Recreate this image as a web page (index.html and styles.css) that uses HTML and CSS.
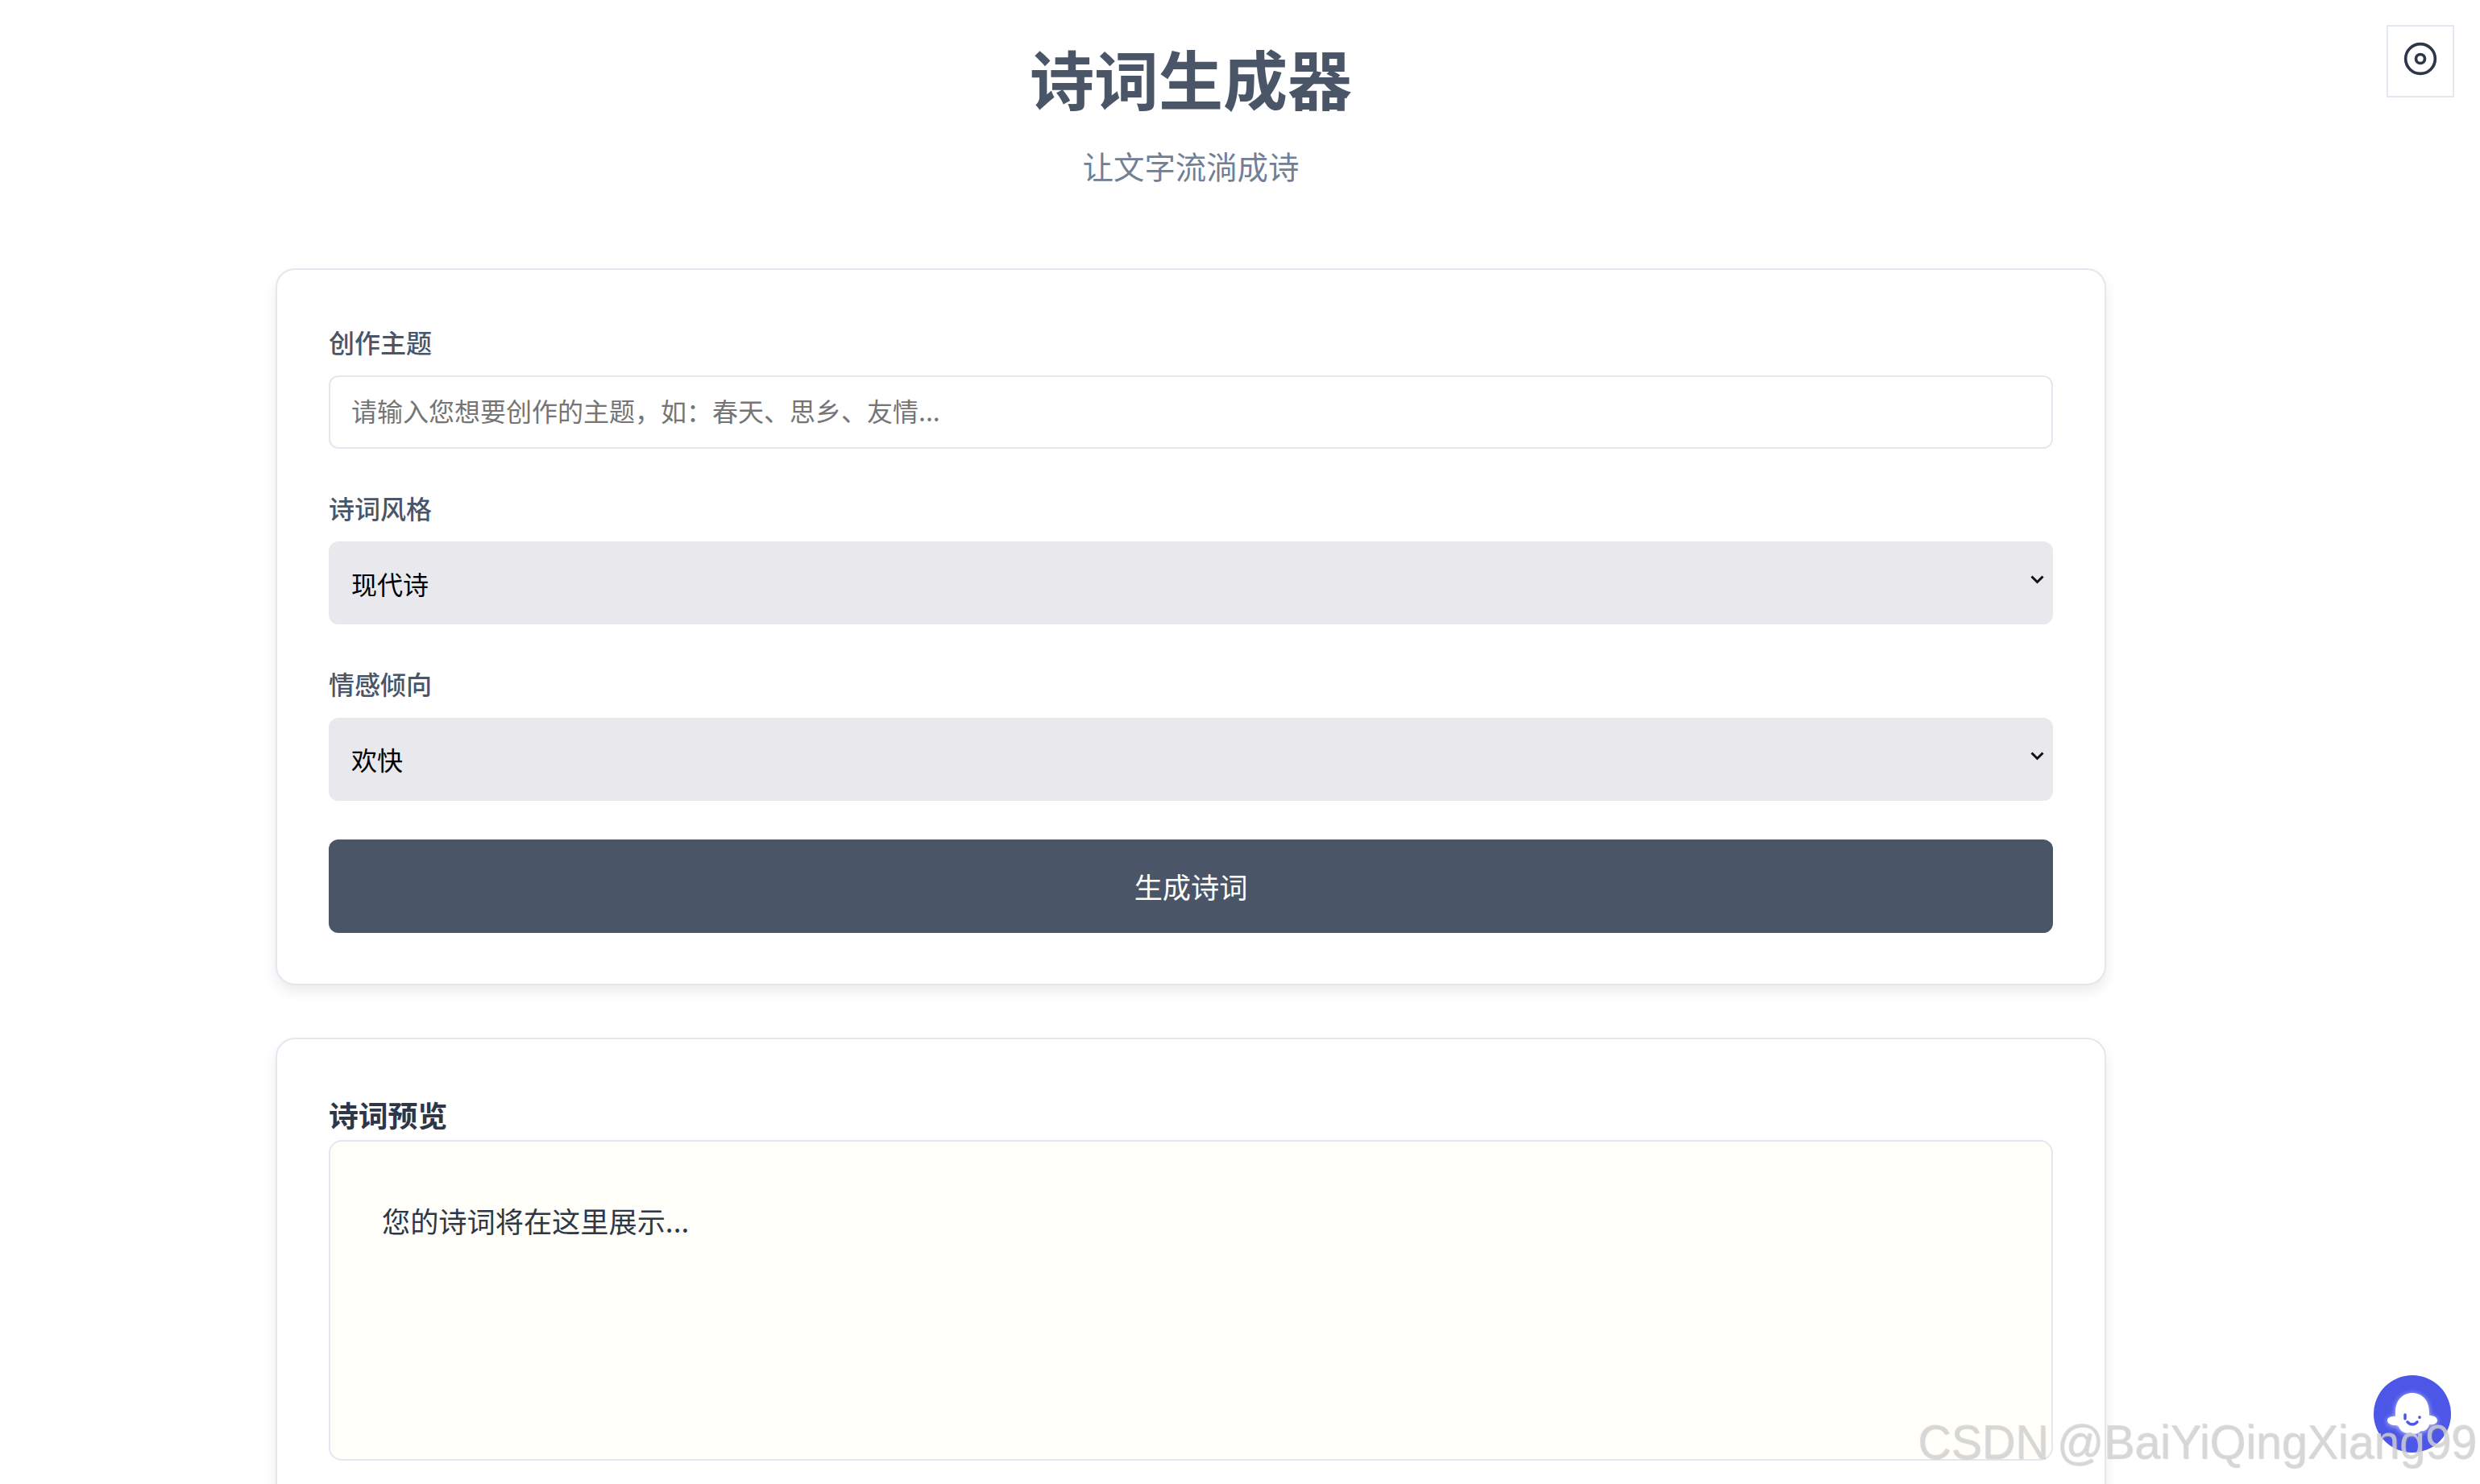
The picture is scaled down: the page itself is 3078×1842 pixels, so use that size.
FILE: index.html
```html
<!DOCTYPE html>
<html lang="zh-CN">
  <head>
    <meta charset="UTF-8" />
    <title>诗词生成器</title>
    <link rel="stylesheet" href="styles.css">
  </head>

  <body>
    <button class="theme-toggle" type="button" aria-label="切换主题">
      <svg viewBox="0 0 24 24" class="theme-icon">
        <circle cx="12" cy="12" r="10"></circle>
        <circle cx="12" cy="12" r="3"></circle>
      </svg>
    </button>

    <div class="page">
      <header class="header">
        <h1 class="title">诗词生成器</h1>
        <p class="subtitle">让文字流淌成诗</p>
      </header>

      <section class="card">
        <div class="form-group">
          <label class="label" for="topic">创作主题</label>
          <input class="input" id="topic" type="text" placeholder="请输入您想要创作的主题，如：春天、思乡、友情...">
        </div>

        <div class="form-group">
          <label class="label" for="style">诗词风格</label>
          <div class="select-wrap">
            <select class="select" id="style">
              <option>现代诗</option>
              <option>五言绝句</option>
              <option>七言律诗</option>
            </select>
            <svg class="chevron" viewBox="0 0 17 11"><path d="M1.5 1.5 8.5 8.5 15.5 1.5"></path></svg>
          </div>
        </div>

        <div class="form-group">
          <label class="label" for="mood">情感倾向</label>
          <div class="select-wrap">
            <select class="select" id="mood">
              <option>欢快</option>
              <option>忧伤</option>
              <option>豪迈</option>
            </select>
            <svg class="chevron" viewBox="0 0 17 11"><path d="M1.5 1.5 8.5 8.5 15.5 1.5"></path></svg>
          </div>
        </div>

        <button class="generate-btn" type="button">生成诗词</button>
      </section>

      <section class="card">
        <h2 class="preview-title">诗词预览</h2>
        <div class="preview">
          <p class="preview-text">您的诗词将在这里展示...</p>
        </div>
      </section>
    </div>

    <!-- floating assistant -->
    <div class="assistant">
      <svg viewBox="0 0 96 96">
        <circle cx="48" cy="48" r="48" fill="#4c57e8"></circle>
        <path class="ghost" d="M27 46C27 31 36 22 48 22S69 31 69 46V50C74 50 79 52 79 56S74 62 69 61C68 66 64 70 59 69C55 73 50 74 46 71C41 73 35 71 32 66C31 63 30 62 27 62C22 62 17 60 17 56S22 51 27 51Z"></path>
        <path class="ghost-face" d="M39 49V54M57 52V52.4M42 58C45 62 51 62 54 58"></path>
      </svg>
    </div>

    <div class="watermark">CSDN @BaiYiQingXiang99</div>
  </body>
</html>
```

FILE: styles.css
```css
html,
body {
  height: 100%;
}

body {
  margin: 0;
  overflow: hidden;
  position: relative;
  background: #fff;
  color: #2d3748;
  font-family: "Noto Sans CJK SC", "Noto Sans", sans-serif;
  font-size: 32px;
  line-height: 1.6;
}

.page {
  width: 2956px;
}

/* Header */
.header {
  height: 333px;
  padding-top: 35px;
  box-sizing: border-box;
  text-align: center;
}

.title {
  margin: 0;
  font-size: 80px;
  font-weight: 700;
  line-height: 120px;
  color: #4a5568;
}

.subtitle {
  margin: 20px 0 0;
  font-size: 38.4px;
  line-height: 61px;
  color: #718096;
}

/* Cards */
.card {
  width: 2272px;
  margin: 0 auto 65px;
  padding: 64px 64px 63px;
  box-sizing: border-box;
  background: #fff;
  border: 2px solid #e2e8f0;
  border-radius: 24px;
  box-shadow: 0 8px 16px rgba(0, 0, 0, 0.08);
}

.form-group {
  margin-bottom: 48px;
}

.label {
  display: block;
  margin-bottom: 16px;
  font-weight: 500;
  color: #4a5568;
}

.input {
  display: block;
  width: 100%;
  height: 91px;
  padding: 0 26px 6px;
  box-sizing: border-box;
  border: 2px solid #e2e8f0;
  border-radius: 12px;
  background: #fff;
  font-family: inherit;
  font-size: 32px;
}

.input::placeholder {
  color: #757575;
  opacity: 1;
}

.select-wrap {
  position: relative;
}

.select {
  display: block;
  width: 100%;
  height: 103px;
  padding: 0 28px;
  box-sizing: border-box;
  border: 0;
  border-radius: 12px;
  background: #e8e8ed;
  color: #000;
  font-family: inherit;
  font-size: 32px;
  appearance: none;
}

.chevron {
  position: absolute;
  top: 42px;
  right: 11px;
  width: 17px;
  height: 11px;
  fill: none;
  stroke: #111;
  stroke-width: 3;
}

.generate-btn {
  display: block;
  width: 100%;
  height: 116px;
  border: 0;
  border-radius: 12px;
  background: #4a5568;
  color: #fff;
  font-family: inherit;
  font-size: 35.2px;
}

/* Preview */
.preview-title {
  margin: 0 0 3px;
  font-size: 36.8px;
  font-weight: 700;
  line-height: 58px;
  color: #2d3748;
}

.preview {
  height: 398px;
  padding: 64px;
  box-sizing: border-box;
  background: #fffef9;
  border: 2px solid #e2e8f0;
  border-radius: 16px;
}

.preview-text {
  margin: 0;
  font-size: 35.2px;
  line-height: 68px;
  color: #2d3748;
}

/* Things lying over the page */
.theme-toggle {
  position: absolute;
  top: 31px;
  right: 32px;
  display: flex;
  justify-content: center;
  align-items: center;
  width: 84px;
  height: 90px;
  padding: 0 0 6px;
  background: #fff;
  border: 2px solid #e2e8f0;
}

.theme-icon {
  width: 44px;
  height: 44px;
  fill: none;
  stroke: #2d3748;
  stroke-width: 2;
}

.assistant {
  position: absolute;
  top: 1707px;
  left: 2946px;
  width: 96px;
  height: 96px;
}

.assistant svg {
  display: block;
}

.ghost {
  fill: #fff;
  filter: drop-shadow(0 1px 3px rgba(255, 255, 255, 0.7));
}

.ghost-face {
  fill: none;
  stroke: #4c57e8;
  stroke-width: 3.5;
  stroke-linecap: round;
}

.watermark {
  position: absolute;
  top: 1750px;
  left: 2380px;
  font-family: "Liberation Sans", sans-serif;
  font-size: 60px;
  line-height: 80px;
  white-space: nowrap;
  word-spacing: -6px;
  color: rgba(215, 215, 215, 0.75);
  text-shadow: 1px 1px 1px rgba(150, 150, 150, 0.4);
  transform: scaleX(0.955);
  transform-origin: left top;
}
```
